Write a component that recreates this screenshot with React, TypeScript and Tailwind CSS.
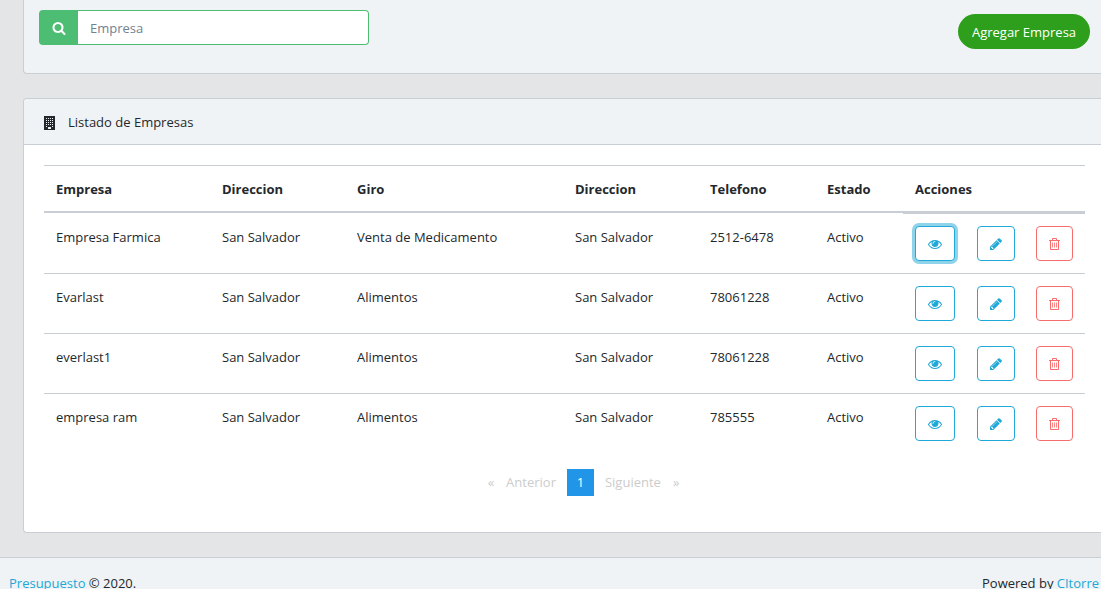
import type { ReactNode } from "react";

type Company = {
  name: string;
  address: string;
  business: string;
  phone: string;
};

const companies: Company[] = [
  { name: "Empresa Farmica", address: "San Salvador", business: "Venta de Medicamento", phone: "2512-6478" },
  { name: "Evarlast", address: "San Salvador", business: "Alimentos", phone: "78061228" },
  { name: "everlast1", address: "San Salvador", business: "Alimentos", phone: "78061228" },
  { name: "empresa ram", address: "San Salvador", business: "Alimentos", phone: "785555" },
];

function Glyph({ d }: { d: string }) {
  return (
    <svg viewBox="0 0 1792 1792" fill="currentColor" className="size-[14px]" aria-hidden="true">
      <path d={d} />
    </svg>
  );
}

const searchPath =
  "M1216 832q0-185-131.5-316.5t-316.5-131.5-316.5 131.5-131.5 316.5 131.5 316.5 316.5 131.5 316.5-131.5 131.5-316.5zm512 832q0 52-38 90t-90 38q-54 0-90-38l-343-342q-179 124-399 124-143 0-273.5-55.5t-225-150-150-225-55.5-273.5 55.5-273.5 150-225 225-150 273.5-55.5 273.5 55.5 225 150 150 225 55.5 273.5q0 220-124 399l343 343q37 37 37 90z";
const eyePath =
  "M1664 960q-152-236-381-353 61 104 61 225 0 185-131.5 316.5t-316.5 131.5-316.5-131.5-131.5-316.5q0-121 61-225-229 117-381 353 133 205 333.5 326.5t434.5 121.5 434.5-121.5 333.5-326.5zm-720-384q0-20-14-34t-34-14q-125 0-214.5 89.5t-89.5 214.5q0 20 14 34t34 14 34-14 14-34q0-86 61-147t147-61q20 0 34-14t14-34zm848 384q0 34-20 69-140 230-376.5 368.5t-499.5 138.5-499.5-139-376.5-368q-20-35-20-69t20-69q140-229 376.5-368t499.5-139 499.5 139 376.5 368q20 35 20 69z";
const pencilPath =
  "M491 1536l91-91-235-235-91 91v107h128v128h107zm523-928q0-22-22-22-10 0-17 7l-542 542q-7 7-7 17 0 22 22 22 10 0 17-7l542-542q7-7 7-17zm-54-192l416 416-832 832h-416v-416zm683 96q0 53-37 90l-166 166-416-416 166-165q36-38 90-38 53 0 91 38l235 234q37 39 37 91z";

function BuildingIcon() {
  return (
    <svg viewBox="0 0 11 14" className="h-[14px] w-[11px]" aria-hidden="true">
      <path d="M0 0h11v14H0z" fill="currentColor" />
      <path
        d="M2 2h1v1H2zM4 2h1v1H4zM6 2h1v1H6zM8 2h1v1H8zM2 4h1v1H2zM4 4h1v1H4zM6 4h1v1H6zM8 4h1v1H8zM2 6h1v1H2zM4 6h1v1H4zM6 6h1v1H6zM8 6h1v1H8zM2 8h1v1H2zM4 8h1v1H4zM6 8h1v1H6zM8 8h1v1H8zM2 10h1v1H2zM8 10h1v1H8zM4 11h3v2H4z"
        fill="#f0f3f5"
      />
    </svg>
  );
}

function TrashIcon() {
  return (
    <svg viewBox="0 0 11 12" fill="none" stroke="currentColor" className="h-3 w-[11px]" aria-hidden="true">
      <path d="M0 2.5h11M3.5 2V.5h4V2M1.5 3v8.5h8V3" />
      <path d="M3.5 4.5v5M5.5 4.5v5M7.5 4.5v5" strokeWidth="0.8" />
    </svg>
  );
}

function ActionButton({ label, className, children }: { label: string; className: string; children: ReactNode }) {
  return (
    <button
      type="button"
      aria-label={label}
      className={`flex h-[35px] items-center justify-center rounded border bg-white ${className}`}
    >
      {children}
    </button>
  );
}

function CompanyRow({ company, first }: { company: Company; first: boolean }) {
  const cell = first ? "border-t border-transparent p-3" : "border-t border-[#c8ced3] p-3";

  return (
    <tr className="align-top leading-[23px]">
      <td className={cell}>{company.name}</td>
      <td className={cell}>{company.address}</td>
      <td className={cell}>{company.business}</td>
      <td className={cell}>{company.address}</td>
      <td className={cell}>{company.phone}</td>
      <td className={cell}>Activo</td>
      <td className="border-t border-[#c8ced3] p-3">
        <div className="flex justify-between">
          <ActionButton
            label={`Ver ${company.name}`}
            className={`w-10 border-[#20a8d8] text-[#20a8d8] ${first ? "ring-3 ring-[#20a8d8]/50" : ""}`}
          >
            <Glyph d={eyePath} />
          </ActionButton>
          <ActionButton label={`Editar ${company.name}`} className="w-[38px] border-[#20a8d8] text-[#20a8d8]">
            <Glyph d={pencilPath} />
          </ActionButton>
          <ActionButton label={`Eliminar ${company.name}`} className="w-[37px] border-[#f86c6b] text-[#f86c6b]">
            <TrashIcon />
          </ActionButton>
        </div>
      </td>
    </tr>
  );
}

export default function App() {
  return (
    <div className="overflow-hidden bg-[#e4e5e6] font-['Open_Sans','Noto_Sans',sans-serif] text-[13px] leading-[21px] text-[#23282c]">
      <main className="pl-[23px]">
        <section className="flex items-start justify-between rounded-bl border-b border-l border-[#c8ced3] bg-[#f0f3f5] pt-[10px] pr-[11px] pb-6 pl-[15px]">
          <div className="flex h-[35px] w-[330px]">
            <button
              type="button"
              aria-label="Buscar"
              className="flex w-[39px] items-center justify-center rounded-l bg-[#4dbd74] text-white"
            >
              <Glyph d={searchPath} />
            </button>
            <input
              type="text"
              aria-label="Empresa"
              placeholder="Empresa"
              className="min-w-0 flex-1 rounded-r border border-l-0 border-[#4dbd74] bg-white px-3 pt-[2px] placeholder:text-[#73818f]"
            />
          </div>
          <button type="button" className="mt-1 h-[35px] w-[132px] rounded-full bg-[#2d9f1c] pt-[2px] text-white">
            Agregar Empresa
          </button>
        </section>

        <section className="mt-6 rounded-l border-y border-l border-[#c8ced3] bg-white">
          <header className="flex items-center gap-[13px] rounded-tl border-b border-[#c8ced3] bg-[#f0f3f5] px-5 pt-[13px] pb-[11px]">
            <BuildingIcon />
            <h2>Listado de Empresas</h2>
          </header>
          <div className="pt-5 pr-4 pb-9 pl-5">
            <table className="w-full table-fixed border-separate border-spacing-0">
              <colgroup>
                <col className="w-[166px]" />
                <col className="w-[135px]" />
                <col className="w-[218px]" />
                <col className="w-[135px]" />
                <col className="w-[117px]" />
                <col />
                <col className="w-[182px]" />
              </colgroup>
              <thead>
                <tr className="text-left">
                  {["Empresa", "Direccion", "Giro", "Direccion", "Telefono", "Estado", "Acciones"].map((title, index) => (
                    <th key={index} className="border-t border-b-2 border-[#c8ced3] px-3 pt-[13px] pb-[11px] font-bold">
                      {title}
                    </th>
                  ))}
                </tr>
              </thead>
              <tbody>
                {companies.map((company, index) => (
                  <CompanyRow key={company.name} company={company} first={index === 0} />
                ))}
              </tbody>
            </table>
            <nav aria-label="Paginas" className="mt-4 flex items-center justify-center pl-[38px] text-[#cccccc]">
              <button type="button" className="pr-3 pl-[10px]">«</button>
              <button type="button" className="pr-[11px]">Anterior</button>
              <button type="button" aria-current="page" className="size-[27px] bg-[#2196e8] text-white">1</button>
              <button type="button" className="pl-[11px]">Siguiente</button>
              <button type="button" className="pr-[10px] pl-3">»</button>
            </nav>
          </div>
        </section>
      </main>

      <footer className="mt-6 flex h-[52px] items-center justify-between border-t border-[#c8ced3] bg-[#f0f3f5] pr-[2px] pl-[9px] whitespace-nowrap">
        <span>
          <a href="#" className="text-[#20a8d8]">Presupuesto</a> © 2020.
        </span>
        <span>
          Powered by <a href="#" className="text-[#20a8d8]">CItorre</a>
        </span>
      </footer>
    </div>
  );
}
